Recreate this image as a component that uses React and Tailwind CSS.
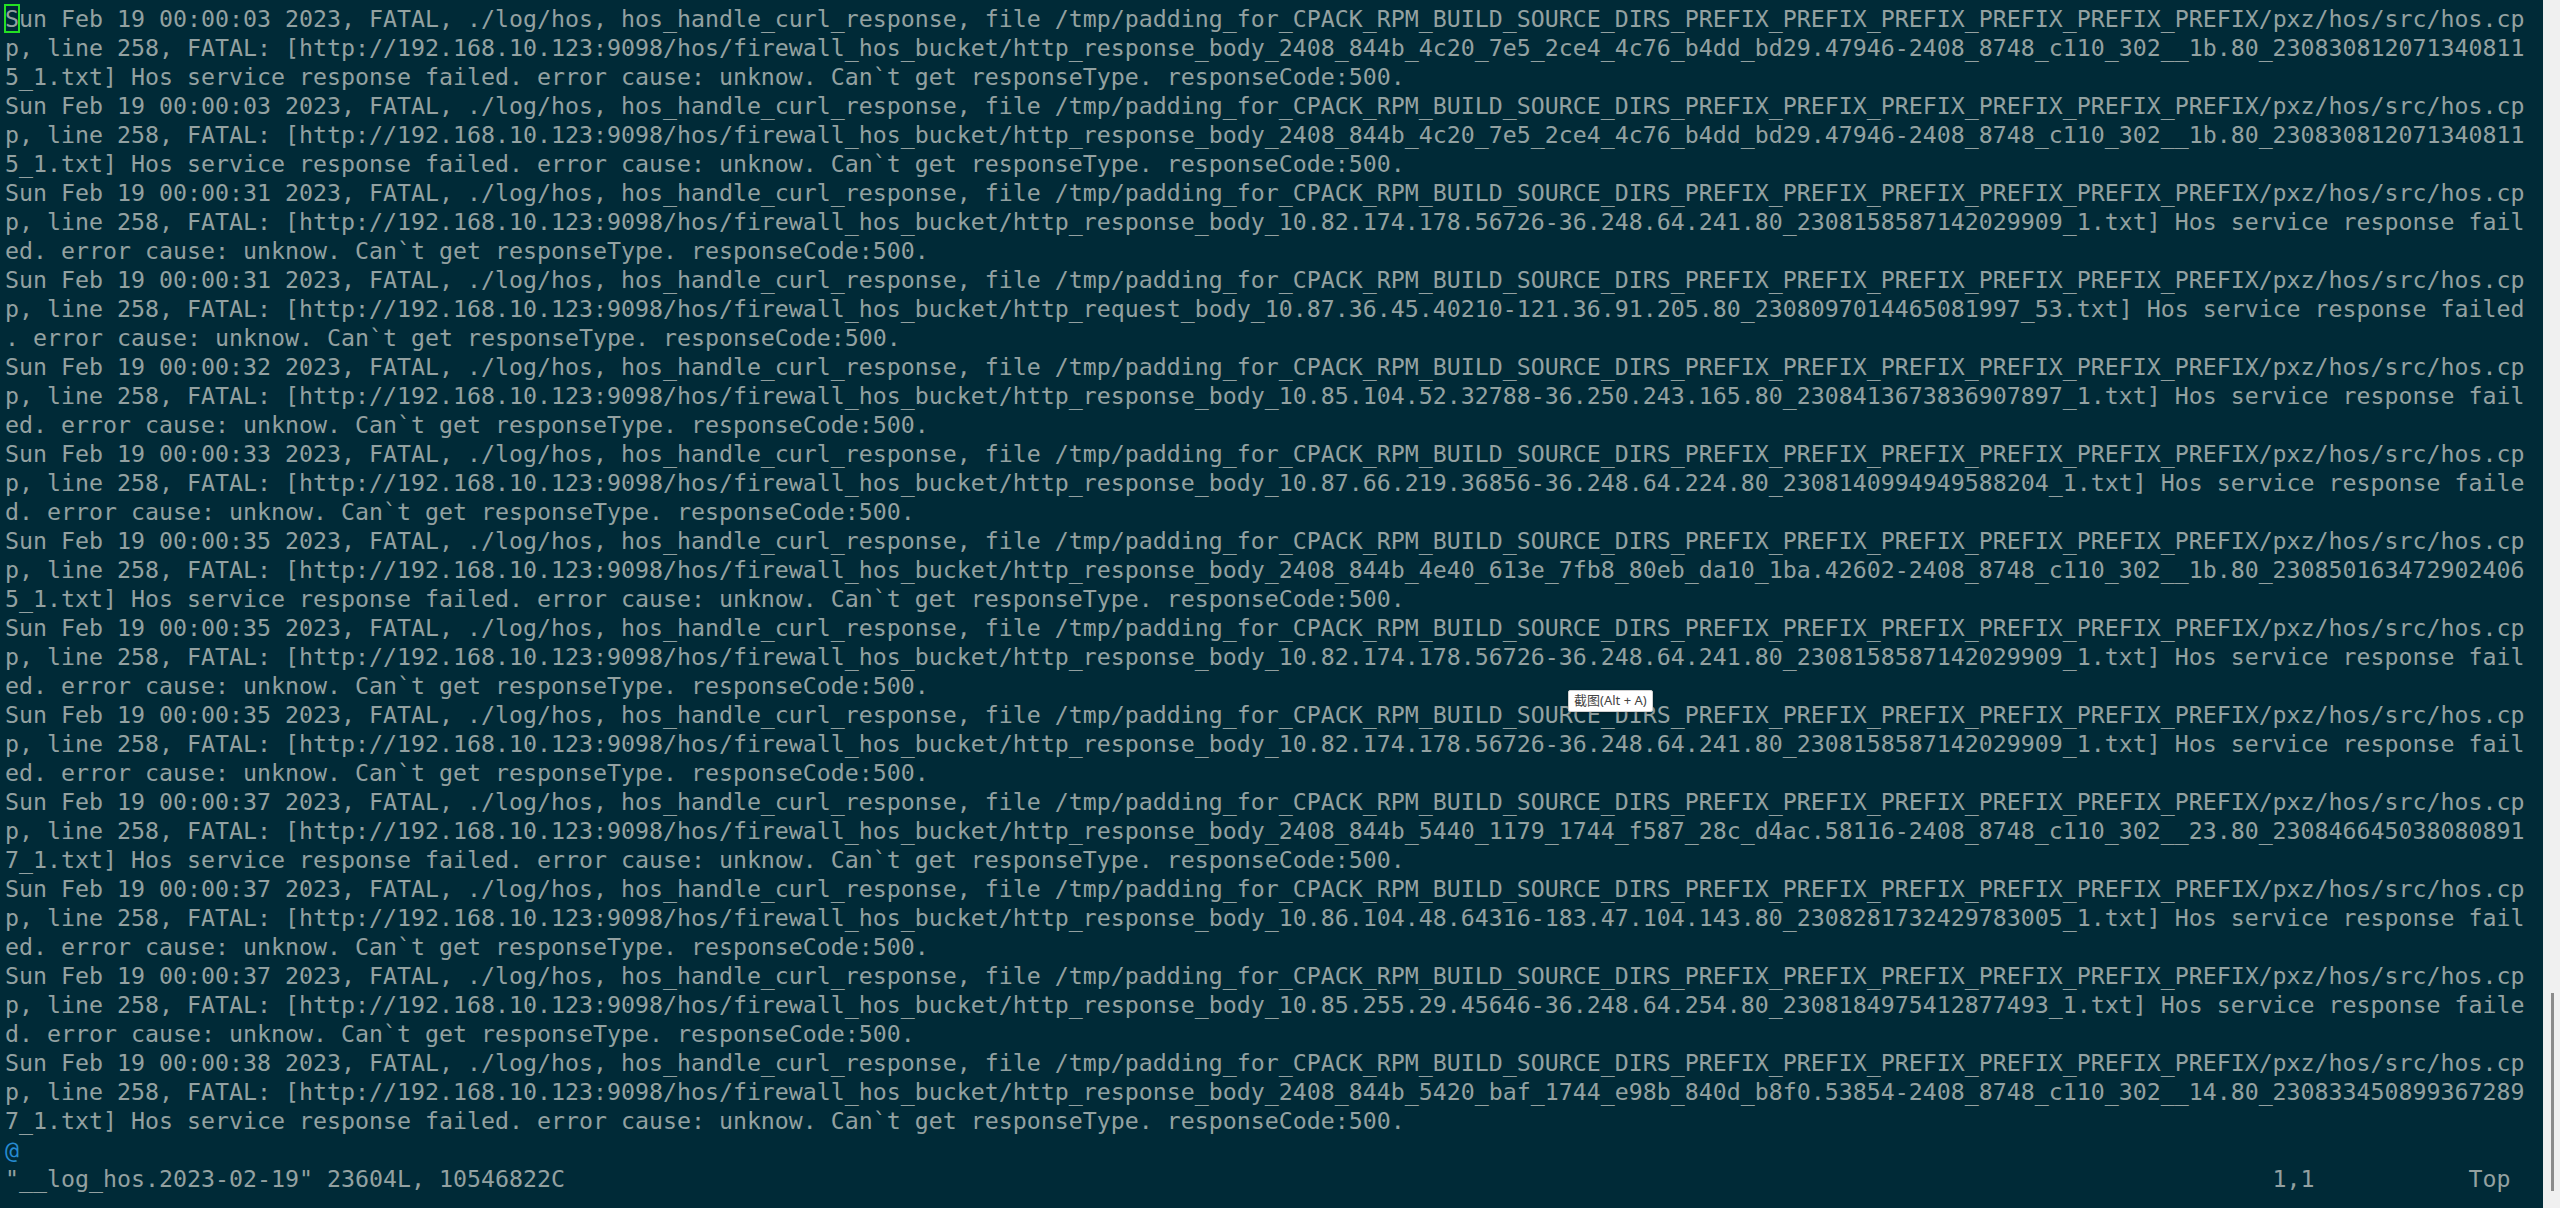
import React from 'react';

const COLS = 180;

const HEAD = ', FATAL, ./log/hos, hos_handle_curl_response, file /tmp/padding_for_CPACK_RPM_BUILD_SOURCE_DIRS_PREFIX_PREFIX_PREFIX_PREFIX_PREFIX_PREFIX/pxz/hos/src/hos.cpp, line 258, FATAL: [http://192.168.10.123:9098/hos/firewall_hos_bucket/';
const TAIL = '] Hos service response failed. error cause: unknow. Can`t get responseType. responseCode:500.';

const entries = [
  ['00:00:03', 'http_response_body_2408_844b_4c20_7e5_2ce4_4c76_b4dd_bd29.47946-2408_8748_c110_302__1b.80_2308308120713408115_1.txt'],
  ['00:00:03', 'http_response_body_2408_844b_4c20_7e5_2ce4_4c76_b4dd_bd29.47946-2408_8748_c110_302__1b.80_2308308120713408115_1.txt'],
  ['00:00:31', 'http_response_body_10.82.174.178.56726-36.248.64.241.80_2308158587142029909_1.txt'],
  ['00:00:31', 'http_request_body_10.87.36.45.40210-121.36.91.205.80_2308097014465081997_53.txt'],
  ['00:00:32', 'http_response_body_10.85.104.52.32788-36.250.243.165.80_2308413673836907897_1.txt'],
  ['00:00:33', 'http_response_body_10.87.66.219.36856-36.248.64.224.80_2308140994949588204_1.txt'],
  ['00:00:35', 'http_response_body_2408_844b_4e40_613e_7fb8_80eb_da10_1ba.42602-2408_8748_c110_302__1b.80_2308501634729024065_1.txt'],
  ['00:00:35', 'http_response_body_10.82.174.178.56726-36.248.64.241.80_2308158587142029909_1.txt'],
  ['00:00:35', 'http_response_body_10.82.174.178.56726-36.248.64.241.80_2308158587142029909_1.txt'],
  ['00:00:37', 'http_response_body_2408_844b_5440_1179_1744_f587_28c_d4ac.58116-2408_8748_c110_302__23.80_2308466450380808917_1.txt'],
  ['00:00:37', 'http_response_body_10.86.104.48.64316-183.47.104.143.80_2308281732429783005_1.txt'],
  ['00:00:37', 'http_response_body_10.85.255.29.45646-36.248.64.254.80_2308184975412877493_1.txt'],
  ['00:00:38', 'http_response_body_2408_844b_5420_baf_1744_e98b_840d_b8f0.53854-2408_8748_c110_302__14.80_2308334508993672897_1.txt'],
];

// the terminal wraps at 180 columns, so cut each entry into screen rows
const rows = entries.flatMap(([time, body]) => {
  const text = `Sun Feb 19 ${time} 2023${HEAD}${body}${TAIL}`;
  const out = [];
  for (let i = 0; i < text.length; i += COLS) out.push(text.slice(i, i + COLS));
  return out;
});

const status = '"__log_hos.2023-02-19" 23604L, 10546822C'.padEnd(162, ' ') + '1,1'.padEnd(14, ' ') + 'Top';

export default function App() {
  return (
    <div className="w-[2560px] h-[1208px] flex overflow-hidden bg-[#002a37] relative">
      <div
        className="flex-1 pl-[5px] pt-[4px] text-[#93a1a1] text-[23.25px] leading-[29px] whitespace-pre"
        style={{ fontFamily: '"DejaVu Sans Mono", "Liberation Mono", monospace' }}
      >
        {rows.map((r, i) => (
          <div key={i} className="h-[29px]">
            {i === 0 ? (
              <>
                <span className="outline-2 outline-[#24e024] -outline-offset-1">{r[0]}</span>
                {r.slice(1)}
              </>
            ) : (
              r
            )}
          </div>
        ))}
        <div className="h-[29px] text-[#268bd2]">@</div>
        <div className="h-[29px]">{status}</div>
      </div>

      <div className="w-[17px] bg-[#f0f0f0] flex flex-col justify-end pb-[17px] pl-[8px]">
        <div className="w-[3px] h-[198px] bg-[#8c8c8c]"></div>
      </div>

      <div
        className="absolute left-[1568px] top-[690px] h-[22px] px-[5px] flex items-center bg-white border border-[#cfcfcf] rounded-[2px] shadow-[0_1px_3px_rgba(0,0,0,0.25)] text-[#444] text-[13px]"
        style={{ fontFamily: '"Noto Sans", "Noto Sans CJK SC", sans-serif' }}
      >
        截图(Alt + A)
      </div>
    </div>
  );
}
